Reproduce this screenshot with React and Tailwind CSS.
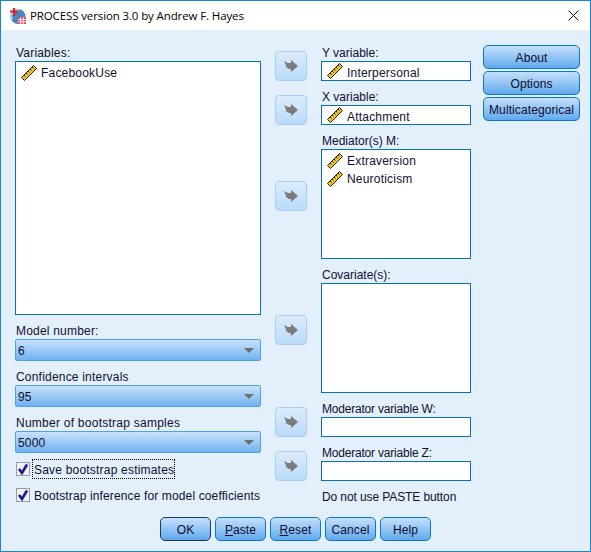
const font = { fontFamily: '"Liberation Sans", Arial, sans-serif' };

function Ruler() {
  return (
    <svg width="16" height="16" viewBox="0 0 16 16" className="shrink-0">
      <path d="M12.500 0.500 15.500 3.500 3.500 15.500 0.500 12.500Z" fill="#f5c518" stroke="#222" strokeWidth="1" />
      <path d="M3 10 4.500 11.500M5 8 6.500 9.500M7 6 8.500 7.500M9 4 10.500 5.500M11 2 12.500 3.500" stroke="#222" strokeWidth="1" fill="none" />
    </svg>
  );
}

function Arrow({ className = "" }) {
  return (
    <button className={"w-8 h-[30px] flex items-center justify-center rounded-[4px] border border-[#a8d0f5] bg-gradient-to-b from-[#dcecfc] to-[#b9daf9] " + className}>
      <svg width="14" height="12" viewBox="0 0 14 12">
        <path d="M0 1 4 3H7V0L14 6 7 12V9H5L1 6.500H2.500Z" fill="#7b7b7b" />
      </svg>
    </button>
  );
}

function Btn({ children, className = "" }) {
  return (
    <button className={"h-6 flex items-center justify-center pt-[2px] rounded-[5px] border border-[#0a78d2] bg-gradient-to-b from-[#c4e0fb] to-[#5fa9ec] text-[12px] tracking-[0.1px] text-[#0c0c30] " + className}>
      {children}
    </button>
  );
}

function Label({ children, className = "" }) {
  return <div className={"h-4 leading-4 pl-px text-[12px] text-[#101030] " + className}>{children}</div>;
}

function Dropdown({ value }) {
  return (
    <div className="h-[22px] flex items-center justify-between pl-[2px] pr-[6px] rounded-[2px] border border-[#4ea1ea] bg-gradient-to-b from-[#c9e2fb] to-[#70b2ef] text-[12px] tracking-[0.2px] text-[#0c0c30]">
      <span className="pt-[2px]">{value}</span>
      <span className="w-0 h-0 border-x-[5px] border-x-transparent border-t-[5px] border-t-[#6f6f6f]" />
    </div>
  );
}

function VarRow({ name, textClass = "" }) {
  return (
    <div className="h-[18px] flex items-center gap-1 pl-[5px] text-[12px] tracking-[0.2px] text-[#101030]">
      <Ruler />
      <span className={textClass}>{name}</span>
    </div>
  );
}

function Check({ children, focused, className = "tracking-[0.2px]" }) {
  return (
    <div className="h-5 flex items-center pl-px">
      <svg width="14" height="14" viewBox="0 0 14 14" className="shrink-0">
        <rect x="0.500" y="0.500" width="13" height="13" fill="#eef0f4" stroke="#9a9aa8" />
        <path d="M3 7 6 11 11 2.500" fill="none" stroke="#1a1a8c" strokeWidth="2.600" />
      </svg>
      <span className={"ml-[2px] h-5 pl-[2px] pr-px pt-[2px] flex items-center whitespace-nowrap text-[12px] text-[#101030] " + className + (focused ? " outline-1 outline-dotted outline-black -outline-offset-1" : "")}>
        {children}
      </span>
    </div>
  );
}

export default function App() {
  const field = "h-5 border border-[#0a6fc2] bg-white";
  const list = "border border-[#0a6fc2] bg-white";
  return (
    <div className="w-[591px] h-[552px] flex flex-col overflow-hidden" style={font}>
      <div className="h-[30px] flex items-center bg-white border-t border-x border-[#1a86d8] pl-[8px] pr-[11px]">
        <svg width="18" height="18" viewBox="0 0 18 18" className="shrink-0">
          <circle cx="9" cy="9.500" r="7.500" fill="#4a86c0" />
          <path d="M3 13a7 7 0 0 1 7-10" fill="none" stroke="#a9cbe8" strokeWidth="2" />
          <path d="M5 1V9M1 4.500H9" stroke="#d8202c" strokeWidth="2.200" />
          <rect x="9" y="10" width="8" height="7" fill="#d8505c" />
          <path d="M9 12.500H17M9 14.800H17M11.700 10V17M14.300 10V17" stroke="#fff" strokeWidth="0.800" />
        </svg>
        <span className="ml-[3px] text-[11.5px] tracking-[-0.12px] text-black" style={{ fontFamily: '"Open Sans", sans-serif' }}>PROCESS version 3.0 by Andrew F. Hayes</span>
        <svg width="11" height="11" viewBox="0 0 11 11" className="ml-auto">
          <path d="M0.500 0.500 10.500 10.500M10.500 0.500 0.500 10.500" stroke="#111" strokeWidth="1" />
        </svg>
      </div>

      <div className="flex-1 flex flex-col bg-[#e3effb] border-x border-b border-[#1a86d8]">
        <div className="flex pt-[15px] pl-[14px]">
          <div className="w-[246px]">
            <Label className="tracking-[0.2px]">Variables:</Label>
            <div className={"h-[254px] pt-[2px] " + list}>
              <VarRow name="FacebookUse" />
            </div>
            <Label className="mt-2 tracking-[0.2px]">Model number:</Label>
            <Dropdown value="6" />
            <Label className="mt-2 tracking-[0.2px]">Confidence intervals</Label>
            <Dropdown value="95" />
            <Label className="mt-2 tracking-[0.25px]">Number of bootstrap samples</Label>
            <Dropdown value="5000" />
            <div className="mt-[6px]">
              <Check focused>Save bootstrap estimates</Check>
            </div>
            <div className="mt-[6px]">
              <Check className="tracking-[0.13px]">Bootstrap inference for model coefficients</Check>
            </div>
          </div>

          <div className="ml-[14px] w-8 pt-[6px] flex flex-col">
            <Arrow />
            <Arrow className="mt-[14px]" />
            <Arrow className="mt-[56px]" />
            <Arrow className="mt-[104px]" />
            <Arrow className="mt-[62px]" />
            <Arrow className="mt-[14px]" />
          </div>

          <div className="ml-[14px] w-[150px]">
            <Label>Y variable:</Label>
            <div className={"flex items-center " + field}>
              <VarRow name="Interpersonal" textClass="pt-[4px]" />
            </div>
            <Label className="mt-2">X variable:</Label>
            <div className={"flex items-center " + field}>
              <VarRow name="Attachment" textClass="pt-[4px]" />
            </div>
            <Label className="mt-2">Mediator(s) M:</Label>
            <div className={"h-[110px] pt-[2px] " + list}>
              <VarRow name="Extraversion" />
              <VarRow name="Neuroticism" />
            </div>
            <Label className="mt-2">Covariate(s):</Label>
            <div className={"h-[110px] " + list} />
            <Label className="mt-2 tracking-[-0.2px]">Moderator variable W:</Label>
            <div className={field} />
            <Label className="mt-2 tracking-[-0.2px]">Moderator variable Z:</Label>
            <div className={field} />
            <Label className="mt-2 tracking-[-0.1px]">Do not use PASTE button</Label>
          </div>

          <div className="ml-3 w-[97px] flex flex-col gap-[2px]">
            <Btn>About</Btn>
            <Btn>Options</Btn>
            <Btn>Multicategorical</Btn>
          </div>
        </div>

        <div className="mt-3 pl-[159px] flex gap-1">
          <Btn className="w-[51px] border-[#123c64] border-[1.500px]">OK</Btn>
          <Btn className="w-[51px]"><span className="underline">P</span>aste</Btn>
          <Btn className="w-[51px]"><span className="underline">R</span>eset</Btn>
          <Btn className="w-[51px]">Cancel</Btn>
          <Btn className="w-[51px]">Help</Btn>
        </div>
      </div>
    </div>
  );
}
